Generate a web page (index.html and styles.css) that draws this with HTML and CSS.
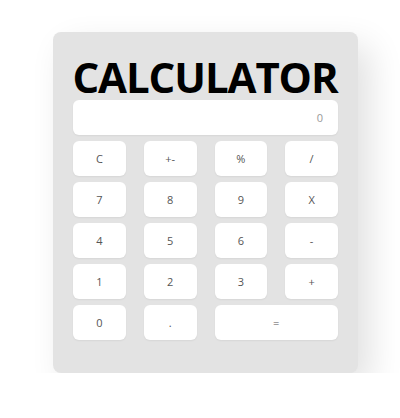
FILE: index.html
```
<!DOCTYPE html>
<html lang="en">
<head>
<meta charset="utf-8">
<title>Calculator</title>
<link rel="stylesheet" href="styles.css">
</head>
<body>
  <div class="calculator">
    <h1 class="title">CALCULATOR</h1>
    <div class="display">0</div>
    <div class="keys">
      <button class="key">C</button>
      <button class="key">+-</button>
      <button class="key">%</button>
      <button class="key">/</button>
      <button class="key">7</button>
      <button class="key">8</button>
      <button class="key">9</button>
      <button class="key">X</button>
      <button class="key">4</button>
      <button class="key">5</button>
      <button class="key">6</button>
      <button class="key">-</button>
      <button class="key">1</button>
      <button class="key">2</button>
      <button class="key">3</button>
      <button class="key">+</button>
      <button class="key">0</button>
      <button class="key">.</button>
      <button class="key key-wide">=</button>
    </div>
  </div>
</body>
</html>
```
FILE: styles.css
```
* {
  box-sizing: border-box;
}

html, body {
  margin: 0;
  background: #ffffff;
}

body {
  font-family: "Open Sans", "Noto Sans", sans-serif;
  padding: 32px 0 0 53px;
}

.calculator {
  width: 305px;
  height: 341px;
  background: #e3e3e3;
  border-radius: 8px;
  padding: 24px 20px 33px;
  box-shadow: 12px 14px 34px rgba(0, 0, 0, 0.12);
  display: flex;
  flex-direction: column;
}

.title {
  margin: 0 0 2px;
  font-size: 42px;
  line-height: 42px;
  font-weight: 700;
  letter-spacing: -1.1px;
  text-indent: -1px;
  color: #000;
  text-align: center;
  white-space: nowrap;
}

.display {
  height: 35px;
  background: #fff;
  border-radius: 6px;
  box-shadow: 0 1px 2px rgba(0, 0, 0, 0.06);
  display: flex;
  align-items: center;
  justify-content: flex-end;
  padding-right: 15px;
  font-size: 11px;
  color: #999;
  margin-bottom: 6px;
}

.keys {
  display: grid;
  grid-template-columns: repeat(4, 1fr);
  grid-auto-rows: 35px;
  column-gap: 18px;
  row-gap: 6px;
}

.key {
  border: none;
  background: #fff;
  border-radius: 6px;
  box-shadow: 0 1px 2px rgba(0, 0, 0, 0.06);
  font-family: inherit;
  font-size: 11px;
  color: #555;
  padding: 0;
}

.key-wide {
  grid-column: span 2;
}
```
